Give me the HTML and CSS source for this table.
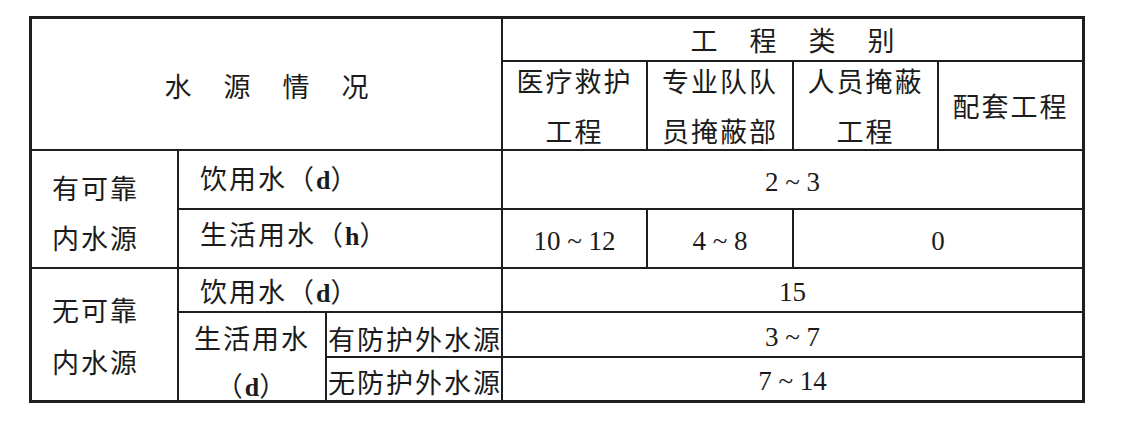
FILE: index.html
```html
<!DOCTYPE html>
<html lang="zh-CN">
<head>
<meta charset="utf-8">
<title>水源情况</title>
<link rel="stylesheet" href="styles.css">
</head>
<body>
<div class="sheet">
  <div class="cell head-main spaced"><span>水</span><span>源</span><span>情</span><span>况</span></div>
  <div class="cell head-cat spaced"><span>工</span><span>程</span><span>类</span><span>别</span></div>
  <div class="cell two r2 c4"><div>医疗救护<br>工程</div></div>
  <div class="cell two r2 c5"><div>专业队队<br>员掩蔽部</div></div>
  <div class="cell two r2 c6"><div>人员掩蔽<br>工程</div></div>
  <div class="cell r2 c7">配套工程</div>

  <div class="cell two left grp1"><div>有可靠<br>内水源</div></div>
  <div class="cell left sub r3"><div>饮用水（<span class="lat">d</span>）</div></div>
  <div class="cell num r3 span-right">2 ~ 3</div>
  <div class="cell left sub r4"><div>生活用水（<span class="lat">h</span>）</div></div>
  <div class="cell num r4 c4">10 ~ 12</div>
  <div class="cell num r4 c5">4 ~ 8</div>
  <div class="cell num r4 c67">0</div>

  <div class="cell two left grp2"><div>无可靠<br>内水源</div></div>
  <div class="cell left sub r5"><div>饮用水（<span class="lat">d</span>）</div></div>
  <div class="cell num r5 span-right">15</div>
  <div class="cell two life-d"><div>生活用水<br>（<span class="lat">d</span>）</div></div>
  <div class="cell src r6 c3">有防护外水源</div>
  <div class="cell num r6 span-right">3 ~ 7</div>
  <div class="cell src src-b r7 c3">无防护外水源</div>
  <div class="cell num r7 span-right">7 ~ 14</div>
</div>
</body>
</html>
```

FILE: styles.css
```css
html, body {
  margin: 0;
  padding: 0;
  background: #ffffff;
}

body {
  font-family: "Liberation Serif", "Noto Sans CJK SC", serif;
  color: #1b1b1b;
}

.sheet {
  display: grid;
  width: max-content;
  margin: 16px 0 0 29px;
  padding: 3px;
  gap: 2px;
  background: #1e1e1e;
  grid-template-columns: 145px 146px 174px 143px 144px 143px 143px;
  grid-template-rows: 41px 87px 57px 57px 42px 43px 42px;
}

.cell {
  background: #ffffff;
  display: flex;
  align-items: center;
  justify-content: center;
  text-align: center;
  font-family: "Noto Sans CJK SC", sans-serif;
  font-size: 27px;
  letter-spacing: 2px;
  line-height: 50px;
  white-space: nowrap;
}

.lat {
  font-family: "Liberation Serif", serif;
  letter-spacing: 0;
  font-weight: bold;
  font-size: 26px;
}

.spaced {
  gap: 32px;
  letter-spacing: 0;
}

.head-main { grid-column: 1 / 4; grid-row: 1 / 3; padding-top: 3px; }
.head-cat  { grid-column: 4 / 8; grid-row: 1 / 2; }

.r2 { grid-row: 2; }
.r3 { grid-row: 3; }
.r4 { grid-row: 4; }
.r5 { grid-row: 5; }
.r6 { grid-row: 6; }
.r7 { grid-row: 7; }

.c3 { grid-column: 3; }
.c4 { grid-column: 4; }
.c5 { grid-column: 5; }
.c6 { grid-column: 6; }
.c7 { grid-column: 7; }
.c67 { grid-column: 6 / 8; }
.span-right { grid-column: 4 / 8; }

.two { line-height: 50px; }

.left {
  justify-content: flex-start;
  text-align: left;
}

.grp1 {
  grid-column: 1;
  grid-row: 3 / 5;
  padding: 8px 0 0 20px;
}

.grp2 {
  grid-column: 1;
  grid-row: 5 / 8;
  padding: 2px 0 0 20px;
  line-height: 52px;
}

.sub {
  grid-column: 2 / 4;
  padding-left: 21px;
}

.r4.sub { padding-bottom: 6px; }
.r5.sub { padding-top: 4px; }

.life-d {
  grid-column: 2;
  grid-row: 6 / 8;
  line-height: 47px;
  padding-top: 12px;
}

.src {
  justify-content: flex-start;
  padding: 8px 0 0 1px;
  letter-spacing: 2px;
}

.src-b { padding-top: 6px; }

.num {
  font-family: "Liberation Serif", serif;
  font-size: 27px;
  letter-spacing: 0;
  padding-top: 4px;
}
```
